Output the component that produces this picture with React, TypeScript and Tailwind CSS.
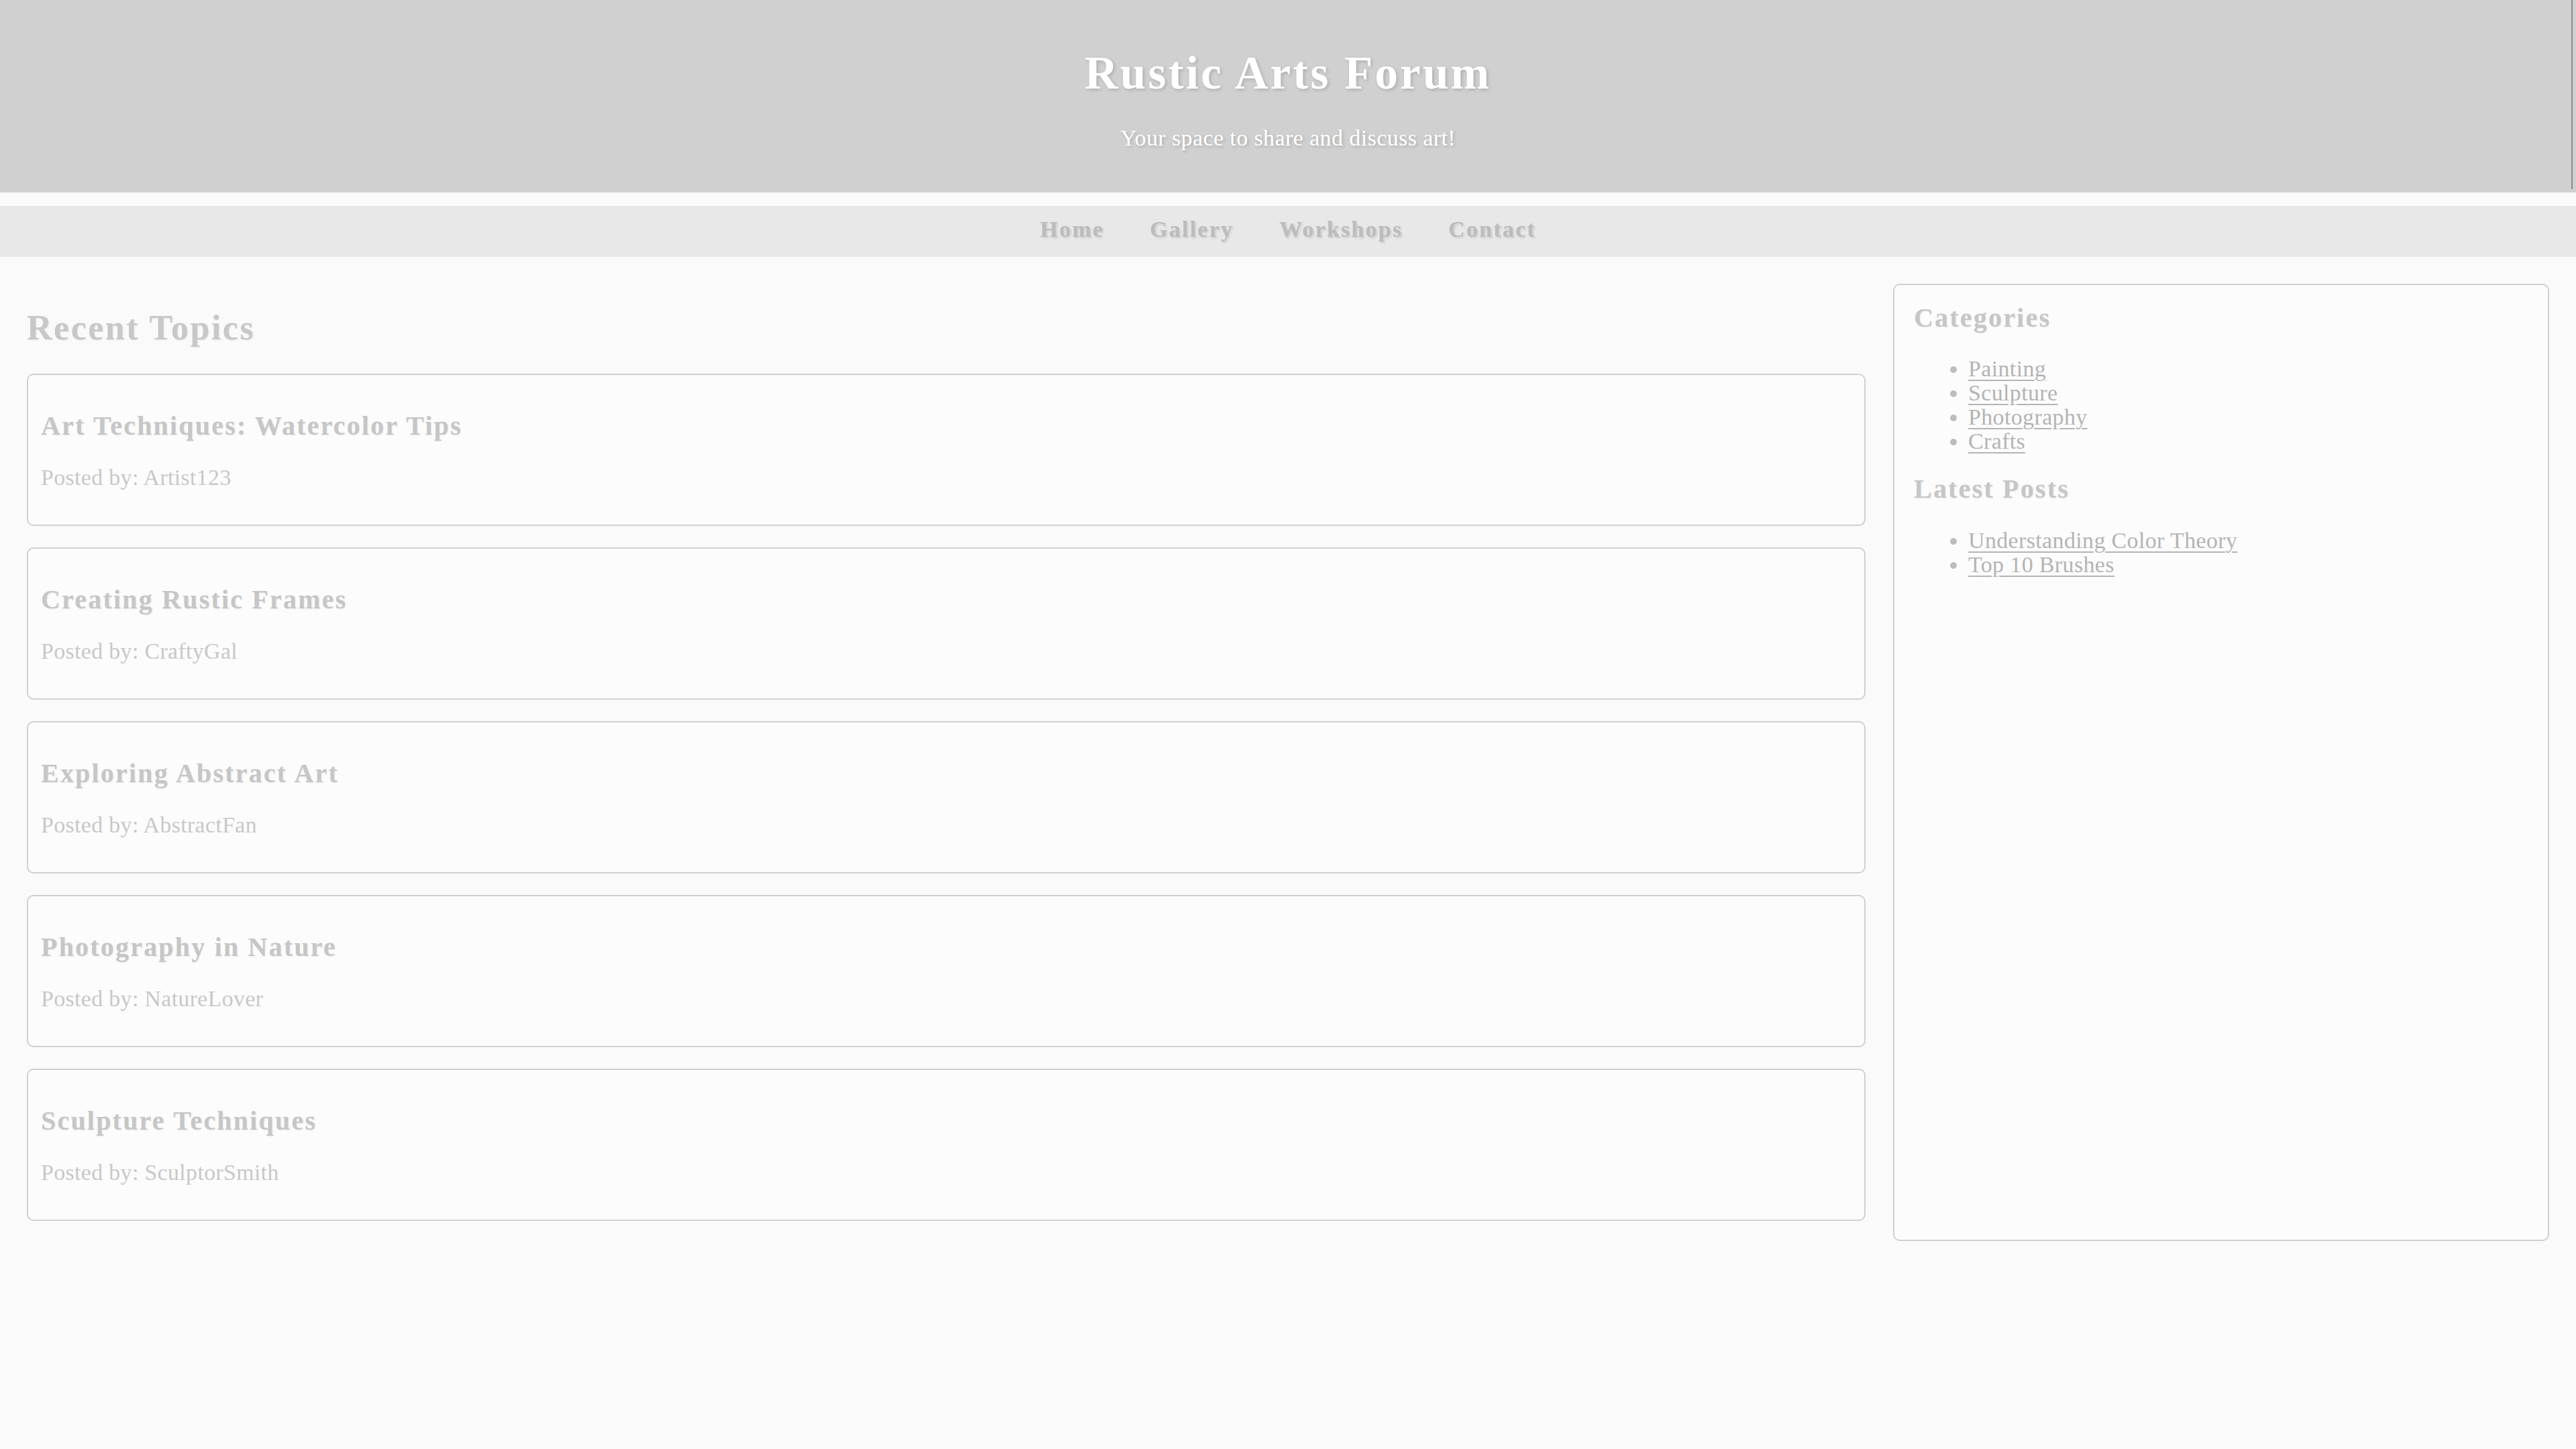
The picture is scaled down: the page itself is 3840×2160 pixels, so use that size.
import React from "react";

const topics = [
  { title: "Art Techniques: Watercolor Tips", author: "Artist123" },
  { title: "Creating Rustic Frames", author: "CraftyGal" },
  { title: "Exploring Abstract Art", author: "AbstractFan" },
  { title: "Photography in Nature", author: "NatureLover" },
  { title: "Sculpture Techniques", author: "SculptorSmith" },
];

const serif = "font-['Liberation_Serif','Times_New_Roman',serif]";

export default function App() {
  return (
    <div className={`min-h-[2160px] bg-[#fafafa] ${serif}`}>
      <header className="relative h-[287px] bg-[#d0d0d0] pt-[75px] text-center text-white">
        <h1 className="text-[69px] font-bold leading-[69px] tracking-[3.2px] [text-shadow:2px_2px_5px_rgba(0,0,0,0.18)]">
          Rustic Arts Forum
        </h1>
        <p className="mt-[45px] text-[34px] leading-[34px] tracking-[0.4px] [text-shadow:2px_2px_4px_rgba(0,0,0,0.18)]">
          Your space to share and discuss art!
        </p>
        <div className="absolute right-[5px] top-0 h-[282px] w-[2px] bg-[#8a8a8a]" />
      </header>

      <nav className="mt-[20px] flex h-[76px] items-center justify-center gap-[68px] bg-[#e8e8e8] pb-[7px]">
        {["Home", "Gallery", "Workshops", "Contact"].map((n) => (
          <a
            key={n}
            className="text-[34px] font-bold leading-[34px] tracking-[2.2px] text-[#bcbcbc] [text-shadow:2px_2px_3px_rgba(0,0,0,0.12)]"
          >
            {n}
          </a>
        ))}
      </nav>

      <div className="flex items-stretch gap-[41px] px-[40px] pt-[40px]">
        <main className="flex flex-1 flex-col pb-[30px]">
          <h2 className="mt-[40px] mb-[42px] text-[52px] font-bold leading-[52px] tracking-[2.5px] text-[#c8c8c8] [text-shadow:1px_1px_2px_rgba(0,0,0,0.08)]">
            Recent Topics
          </h2>
          <div className="flex flex-col gap-[32px]">
            {topics.map((t) => (
              <div
                key={t.title}
                className="rounded-[10px] border-2 border-[#d0d0d0] bg-[#fcfcfc] px-[19px] pt-[56px] pb-[53px]"
              >
                <h3 className="text-[40px] font-bold leading-[40px] tracking-[2.2px] text-[#c6c6c6] [text-shadow:1px_1px_2px_rgba(0,0,0,0.08)]">
                  {t.title}
                </h3>
                <p className="mt-[40px] text-[34px] leading-[34px] tracking-[0.3px] text-[#c8c8c8]">
                  Posted by: {t.author}
                </p>
              </div>
            ))}
          </div>
        </main>

        <aside className="w-[978px] shrink-0 rounded-[10px] border-2 border-[#d0d0d0] bg-[#fcfcfc] px-[29px] pt-[29px]">
          <h3 className="text-[40px] font-bold leading-[40px] tracking-[2.2px] text-[#c6c6c6] [text-shadow:1px_1px_2px_rgba(0,0,0,0.08)]">
            Categories
          </h3>
          <ul className="mt-[38px] list-disc pl-[81px] text-[34px] leading-[36px] tracking-[0.35px] text-[#bdbdbd]">
            {["Painting", "Sculpture", "Photography", "Crafts"].map((c) => (
              <li key={c}>
                <a className="text-[#b4b4b4] underline decoration-[#b4b4b4] decoration-2 underline-offset-[5px]">{c}</a>
              </li>
            ))}
          </ul>
          <h3 className="mt-[33px] text-[40px] font-bold leading-[40px] tracking-[2.2px] text-[#c6c6c6] [text-shadow:1px_1px_2px_rgba(0,0,0,0.08)]">
            Latest Posts
          </h3>
          <ul className="mt-[39px] list-disc pl-[81px] text-[34px] leading-[36px] tracking-[0.35px] text-[#bdbdbd]">
            {["Understanding Color Theory", "Top 10 Brushes"].map((c) => (
              <li key={c}>
                <a className="text-[#b4b4b4] underline decoration-[#b4b4b4] decoration-2 underline-offset-[5px]">{c}</a>
              </li>
            ))}
          </ul>
        </aside>
      </div>
    </div>
  );
}
